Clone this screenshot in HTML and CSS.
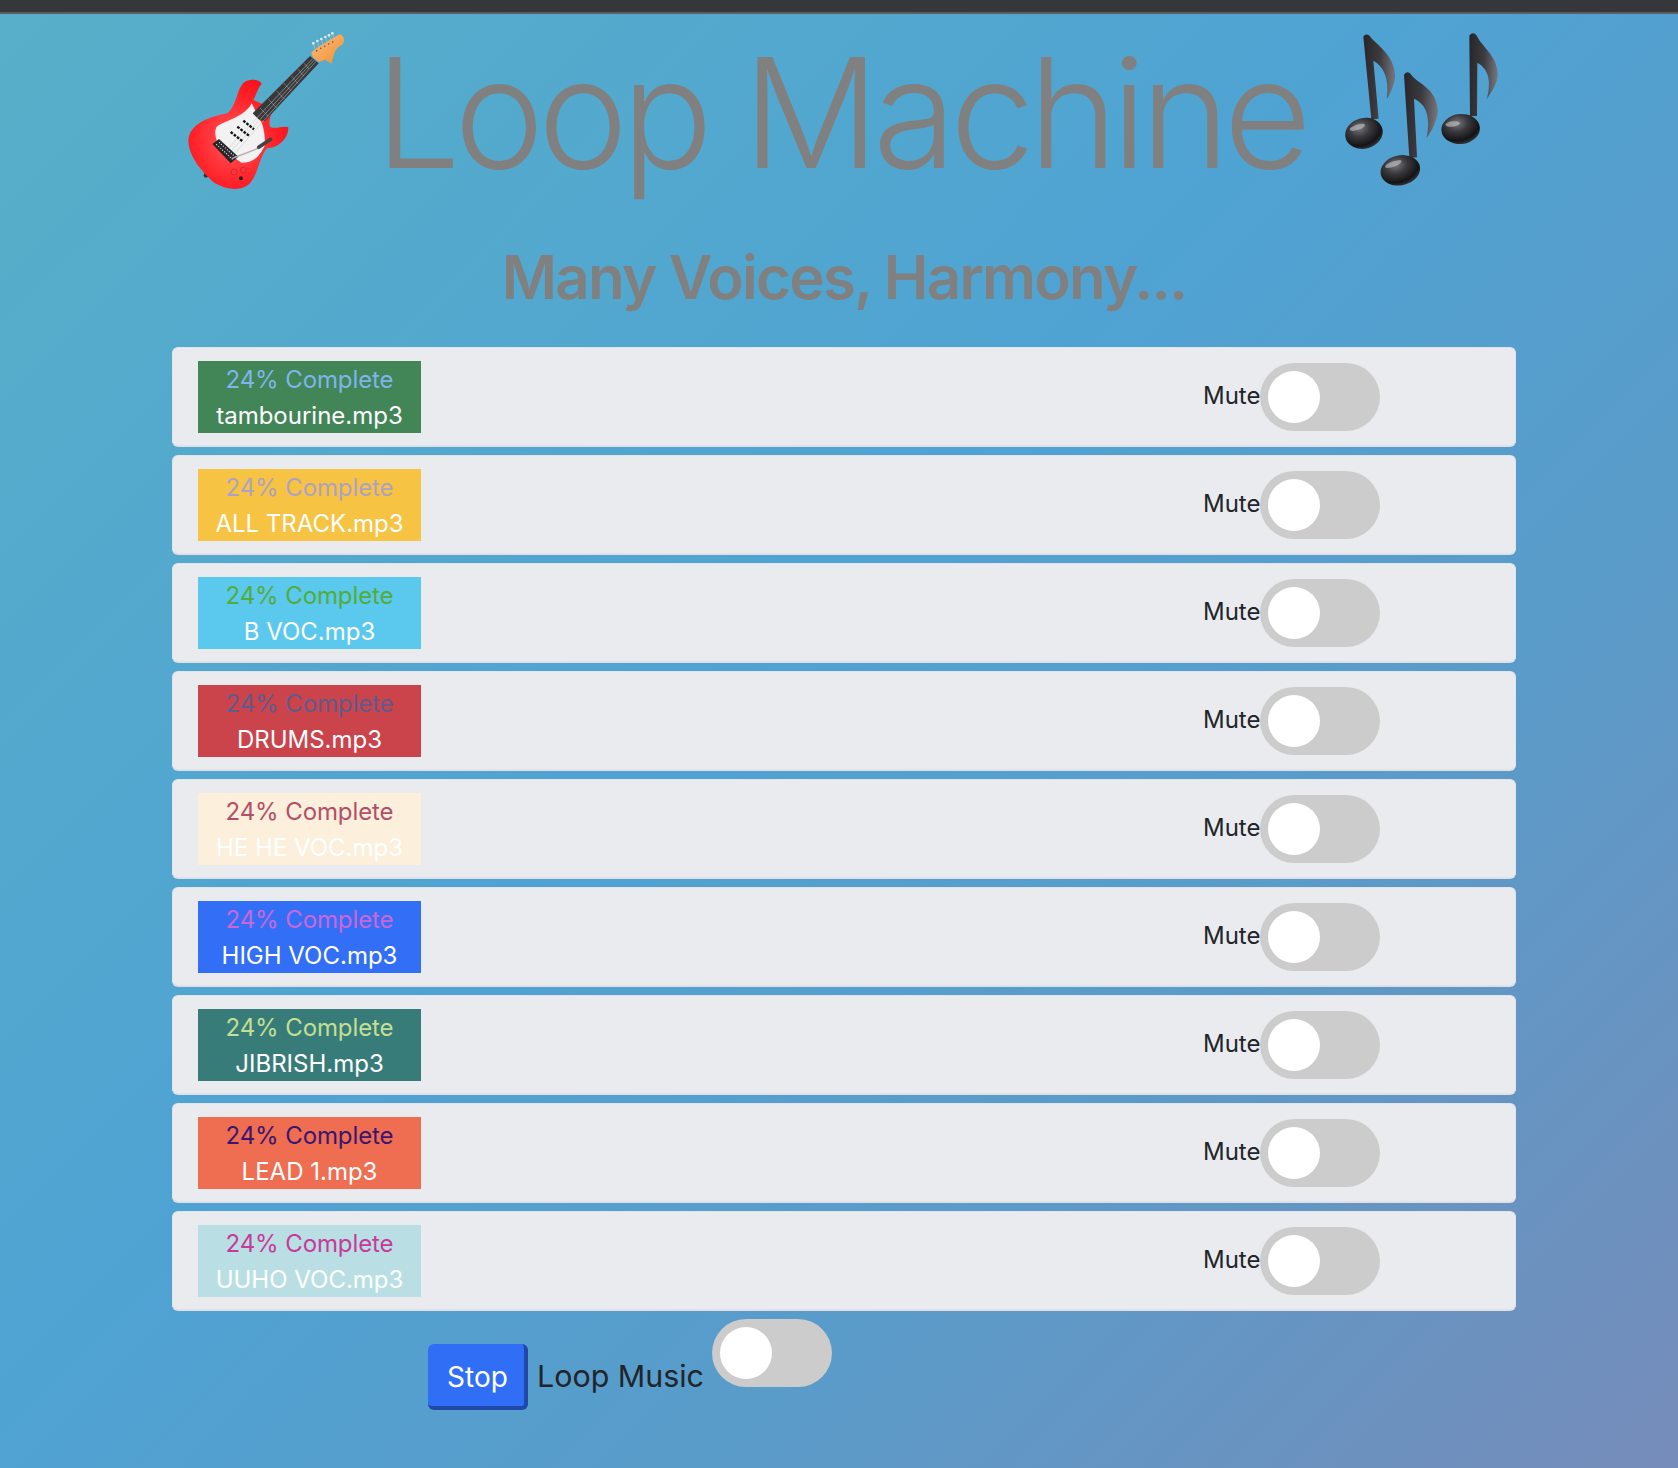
FILE: index.html
```html
<!DOCTYPE html>
<html lang="en">
<head>
<meta charset="utf-8">
<title>Loop Machine</title>
<link rel="stylesheet" href="styles.css">
</head>
<body>
<div class="topbar"></div>
<main class="page">
  <svg width="0" height="0" class="defs" aria-hidden="true">
    <defs>
      <radialGradient id="bodyG" cx="0.45" cy="0.55" r="0.62">
        <stop offset="0" stop-color="#ff5a5e"/><stop offset="0.65" stop-color="#ff2228"/><stop offset="1" stop-color="#f5101a"/>
      </radialGradient>
      <linearGradient id="headG" x1="0" y1="0" x2="1" y2="1">
        <stop offset="0" stop-color="#ffbd7c"/><stop offset="1" stop-color="#ee8f35"/>
      </linearGradient>
      <linearGradient id="noteG" x1="0" y1="0" x2="1" y2="0.2">
        <stop offset="0" stop-color="#26262a"/><stop offset="0.55" stop-color="#3a3a3f"/><stop offset="1" stop-color="#707076"/>
      </linearGradient>
      <radialGradient id="headN" cx="0.42" cy="0.3" r="0.8">
        <stop offset="0" stop-color="#77777c"/><stop offset="0.35" stop-color="#3a3a3e"/><stop offset="0.72" stop-color="#141416"/><stop offset="1" stop-color="#4a4a4e"/>
      </radialGradient>
    </defs>
  </svg>
  <h1 class="title">
    <svg class="emoji guitar" viewBox="0 0 570 540" aria-hidden="true">
      <circle cx="108" cy="466" r="7" fill="#333"/>
      <path fill="url(#bodyG)" d="M250 240C262 220 262 205 275 192C270 178 245 175 225 185C200 200 205 250 172 280C120 290 60 310 55 360C55 410 100 460 135 490C170 510 215 515 240 490C265 460 265 420 290 385C320 385 355 360 355 322C340 315 315 330 300 320C295 305 300 285 312 268Z"/>
      <path fill="#f2f2f2" d="M245 250C225 290 170 300 140 320C130 340 140 365 150 385L215 428C240 428 265 420 285 375C285 340 280 315 270 300Z"/>
      <path fill="#38383a" d="M248 280L420 108L446 130L284 304L268 300Z"/>
      <g stroke="#c8c8c8" stroke-width="1.6">
        <path d="M175 385L428 116M185 392L433 120M195 399L438 124"/>
      </g>
      <g stroke="#e4e4e4" stroke-width="2" stroke-dasharray="2 2">
        <path d="M270 264L296 290M296 238L320 264M320 213L344 238M342 190L364 214M364 168L384 190M384 148L402 168M402 130L418 148"/>
      </g>
      <path stroke="#bdbdbd" stroke-width="2" d="M430 70L436 90M442 63L448 83M454 57L460 77M466 51L472 71M477 46L483 62M487 40L493 56"/>
      <path fill="url(#headG)" d="M424 100C430 90 445 80 470 66C485 58 497 48 510 43C524 48 528 68 512 77C495 85 492 100 485 131L465 119L447 126L430 113Z"/>
      <g fill="#e8e8e8"><circle cx="430" cy="70" r="4"/><circle cx="442" cy="63" r="4"/><circle cx="454" cy="57" r="4"/><circle cx="466" cy="51" r="4"/><circle cx="477" cy="46" r="4"/><circle cx="487" cy="40" r="4"/></g>
      <g fill="#6b5640"><circle cx="440" cy="92" r="2.5"/><circle cx="452" cy="85" r="2.5"/><circle cx="464" cy="79" r="2.5"/><circle cx="476" cy="72" r="2.5"/><circle cx="488" cy="66" r="2.5"/></g>
      <g stroke="#111" stroke-width="7" stroke-dasharray="8 4">
        <path d="M220 302L252 328M202 320L238 348M182 336L218 364"/>
      </g>
      <path fill="#26262a" d="M127 372L147 357L205 410L182 430Z"/>
      <g stroke="#ddd" stroke-width="4" stroke-dasharray="3 5"><path d="M147 367L197 412M139 373L188 418"/></g>
      <path fill="none" stroke="#b0b0b0" stroke-width="4" d="M185 416L262 386"/>
      <path stroke="#444" stroke-width="11" stroke-linecap="round" d="M266 382L302 358"/>
      <g fill="#f5343d" stroke="#c8141e" stroke-width="1.5"><circle cx="192" cy="456" r="9"/><circle cx="220" cy="450" r="9"/></g>
      <circle cx="213" cy="475" r="6" fill="#222"/>
    </svg>
    <span class="title-text">Loop Machine</span>
    <svg class="emoji notes" viewBox="0 0 540 540" aria-hidden="true">
      <path fill="url(#noteG)" d="M100 50C105 40 118 42 122 52C140 75 192 105 195 165C195 190 182 220 170 238C176 195 172 145 130 122L146 296L124 298Z"/>
      <ellipse cx="102" cy="340" rx="57" ry="46" transform="rotate(-14 102 340)" fill="url(#headN)"/>
      <ellipse cx="82" cy="322" rx="24" ry="8" transform="rotate(-18 82 322)" fill="#c8c8cc" opacity="0.6"/>
      <path fill="url(#noteG)" d="M222 165C228 153 238 155 244 165C262 190 320 205 323 270C323 300 305 332 290 355C300 300 295 255 252 236L261 412L238 414Z"/>
      <ellipse cx="211" cy="451" rx="60" ry="45" transform="rotate(-12 211 451)" fill="url(#headN)"/>
      <ellipse cx="190" cy="432" rx="26" ry="8" transform="rotate(-20 190 432)" fill="#c8c8cc" opacity="0.6"/>
      <path fill="url(#noteG)" d="M418 48C424 36 436 38 442 50C456 80 500 105 503 160C503 190 486 215 470 238C482 195 482 150 442 128L441 288L420 288Z"/>
      <ellipse cx="392" cy="327" rx="58" ry="45" transform="rotate(-5 392 327)" fill="url(#headN)"/>
      <ellipse cx="368" cy="312" rx="22" ry="8" transform="rotate(-6 368 312)" fill="#c8c8cc" opacity="0.6"/>
    </svg>
  </h1>
  <h2 class="subtitle">Many Voices, Harmony...</h2>
  <section class="tracks">
    <div class="card">
      <div class="progress bg-green"><span class="pct c-green">24% Complete</span><span class="name">tambourine.mp3</span></div>
      <div class="mute"><span class="mute-label">Mute</span><span class="switch"><span class="knob"></span></span></div>
    </div>
    <div class="card">
      <div class="progress bg-yellow"><span class="pct c-yellow">24% Complete</span><span class="name">ALL TRACK.mp3</span></div>
      <div class="mute"><span class="mute-label">Mute</span><span class="switch"><span class="knob"></span></span></div>
    </div>
    <div class="card">
      <div class="progress bg-sky"><span class="pct c-sky">24% Complete</span><span class="name">B VOC.mp3</span></div>
      <div class="mute"><span class="mute-label">Mute</span><span class="switch"><span class="knob"></span></span></div>
    </div>
    <div class="card">
      <div class="progress bg-red"><span class="pct c-red">24% Complete</span><span class="name">DRUMS.mp3</span></div>
      <div class="mute"><span class="mute-label">Mute</span><span class="switch"><span class="knob"></span></span></div>
    </div>
    <div class="card">
      <div class="progress bg-cream"><span class="pct c-cream">24% Complete</span><span class="name">HE HE VOC.mp3</span></div>
      <div class="mute"><span class="mute-label">Mute</span><span class="switch"><span class="knob"></span></span></div>
    </div>
    <div class="card">
      <div class="progress bg-blue"><span class="pct c-blue">24% Complete</span><span class="name">HIGH VOC.mp3</span></div>
      <div class="mute"><span class="mute-label">Mute</span><span class="switch"><span class="knob"></span></span></div>
    </div>
    <div class="card">
      <div class="progress bg-teal"><span class="pct c-teal">24% Complete</span><span class="name">JIBRISH.mp3</span></div>
      <div class="mute"><span class="mute-label">Mute</span><span class="switch"><span class="knob"></span></span></div>
    </div>
    <div class="card">
      <div class="progress bg-orange"><span class="pct c-orange">24% Complete</span><span class="name">LEAD 1.mp3</span></div>
      <div class="mute"><span class="mute-label">Mute</span><span class="switch"><span class="knob"></span></span></div>
    </div>
    <div class="card">
      <div class="progress bg-ice"><span class="pct c-ice">24% Complete</span><span class="name">UUHO VOC.mp3</span></div>
      <div class="mute"><span class="mute-label">Mute</span><span class="switch"><span class="knob"></span></span></div>
    </div>
  </section>
  <div class="controls">
    <button class="stop" type="button">Stop</button>
    <span class="loop-label">Loop Music</span>
    <span class="switch"><span class="knob"></span></span>
  </div>
</main>
</body>
</html>
```
FILE: styles.css
```css
* { box-sizing: border-box; }
html, body { margin: 0; height: 100%; }
body {
  width: 1678px;
  height: 1468px;
  overflow: hidden;
  font-family: Inter, "Noto Sans", sans-serif;
  color: #212529;
  background: linear-gradient(135deg, #57afc8 0%, #4fa3d3 45%, #5a9bc9 70%, #768cba 100%);
}
.defs { position: absolute; }
.topbar {
  height: 14px;
  background: #36373b;
  border-bottom: 2px solid #5c5d60;
}
.page {
  width: 1344px;
  margin-left: 172px;
}
.title {
  margin: 0;
  height: 186px;
  padding-top: 6px;
  display: flex;
  align-items: center;
  color: #808080;
  font-weight: 300;
  font-size: 152px;
  line-height: 180px;
  letter-spacing: -6.5px;
  white-space: nowrap;
}
.emoji { flex: none; display: block; }
.guitar { width: 190px; height: 180px; margin-left: -2px; }
.notes { width: 180px; height: 180px; margin-left: auto; margin-right: 6px; }
.title-text { margin: 6px 0 0 15px; }
.subtitle {
  margin: 0;
  height: 147px;
  padding-top: 41px;
  text-align: center;
  color: #808080;
  font-weight: 600;
  font-size: 60px;
  line-height: 72px;
  letter-spacing: -1.75px;
}
.tracks { display: flex; flex-direction: column; gap: 8px; }
.card {
  height: 100px;
  display: flex;
  align-items: center;
  padding: 0 25px;
  background: #eaebef;
  border: 1px solid #e2e4ea;
  border-bottom: 2px solid #dfe1e7;
  border-radius: 6px;
}
.progress {
  width: 223px;
  height: 72px;
  padding-top: 2px;
  display: flex;
  flex-direction: column;
  align-items: center;
  justify-content: center;
  font-size: 24px;
  line-height: 36px;
}
.pct { letter-spacing: -0.1px; }
.name { color: #fff; }
.mute {
  display: flex;
  align-items: center;
  margin-left: 782px;
}
.mute-label { font-size: 24px; line-height: 36px; padding-bottom: 2px; color: #212529; }
.switch {
  display: flex;
  align-items: center;
  width: 120px;
  height: 68px;
  padding-left: 8px;
  border-radius: 34px;
  background: #ccc;
}
.knob {
  width: 52px;
  height: 52px;
  border-radius: 50%;
  background: #fff;
}
.controls {
  display: flex;
  align-items: flex-start;
  margin: 8px 0 0 256px;
}
.stop {
  width: 100px;
  height: 66px;
  margin-top: 25px;
  padding: 4px 0 0 3px;
  border: 0;
  border-right: 4px solid #2148a8;
  border-bottom: 4px solid #2148a8;
  border-radius: 6px;
  background: #316ef6;
  color: #fff;
  font: 400 28px Inter, sans-serif;
}
.loop-label {
  margin: 36px 8px 0 9px;
  font-size: 30.4px;
  line-height: 42px;
  color: #212529;
}
.bg-green { background: #428557; } .c-green { color: #7eb5ea; }
.bg-yellow { background: #f7c343; } .c-yellow { color: #aea2c4; }
.bg-sky { background: #5bc8ee; } .c-sky { color: #52ad38; }
.bg-red { background: #cb434b; } .c-red { color: #5f5b8c; }
.bg-cream { background: #fcf0dc; } .c-cream { color: #b44e68; }
.bg-blue { background: #336ef6; } .c-blue { color: #cc66d8; }
.bg-teal { background: #387c7a; } .c-teal { color: #c3df93; }
.bg-orange { background: #ef6e51; } .c-orange { color: #3a1670; }
.bg-ice { background: #b9dfe5; } .c-ice { color: #c83a9a; }
```
